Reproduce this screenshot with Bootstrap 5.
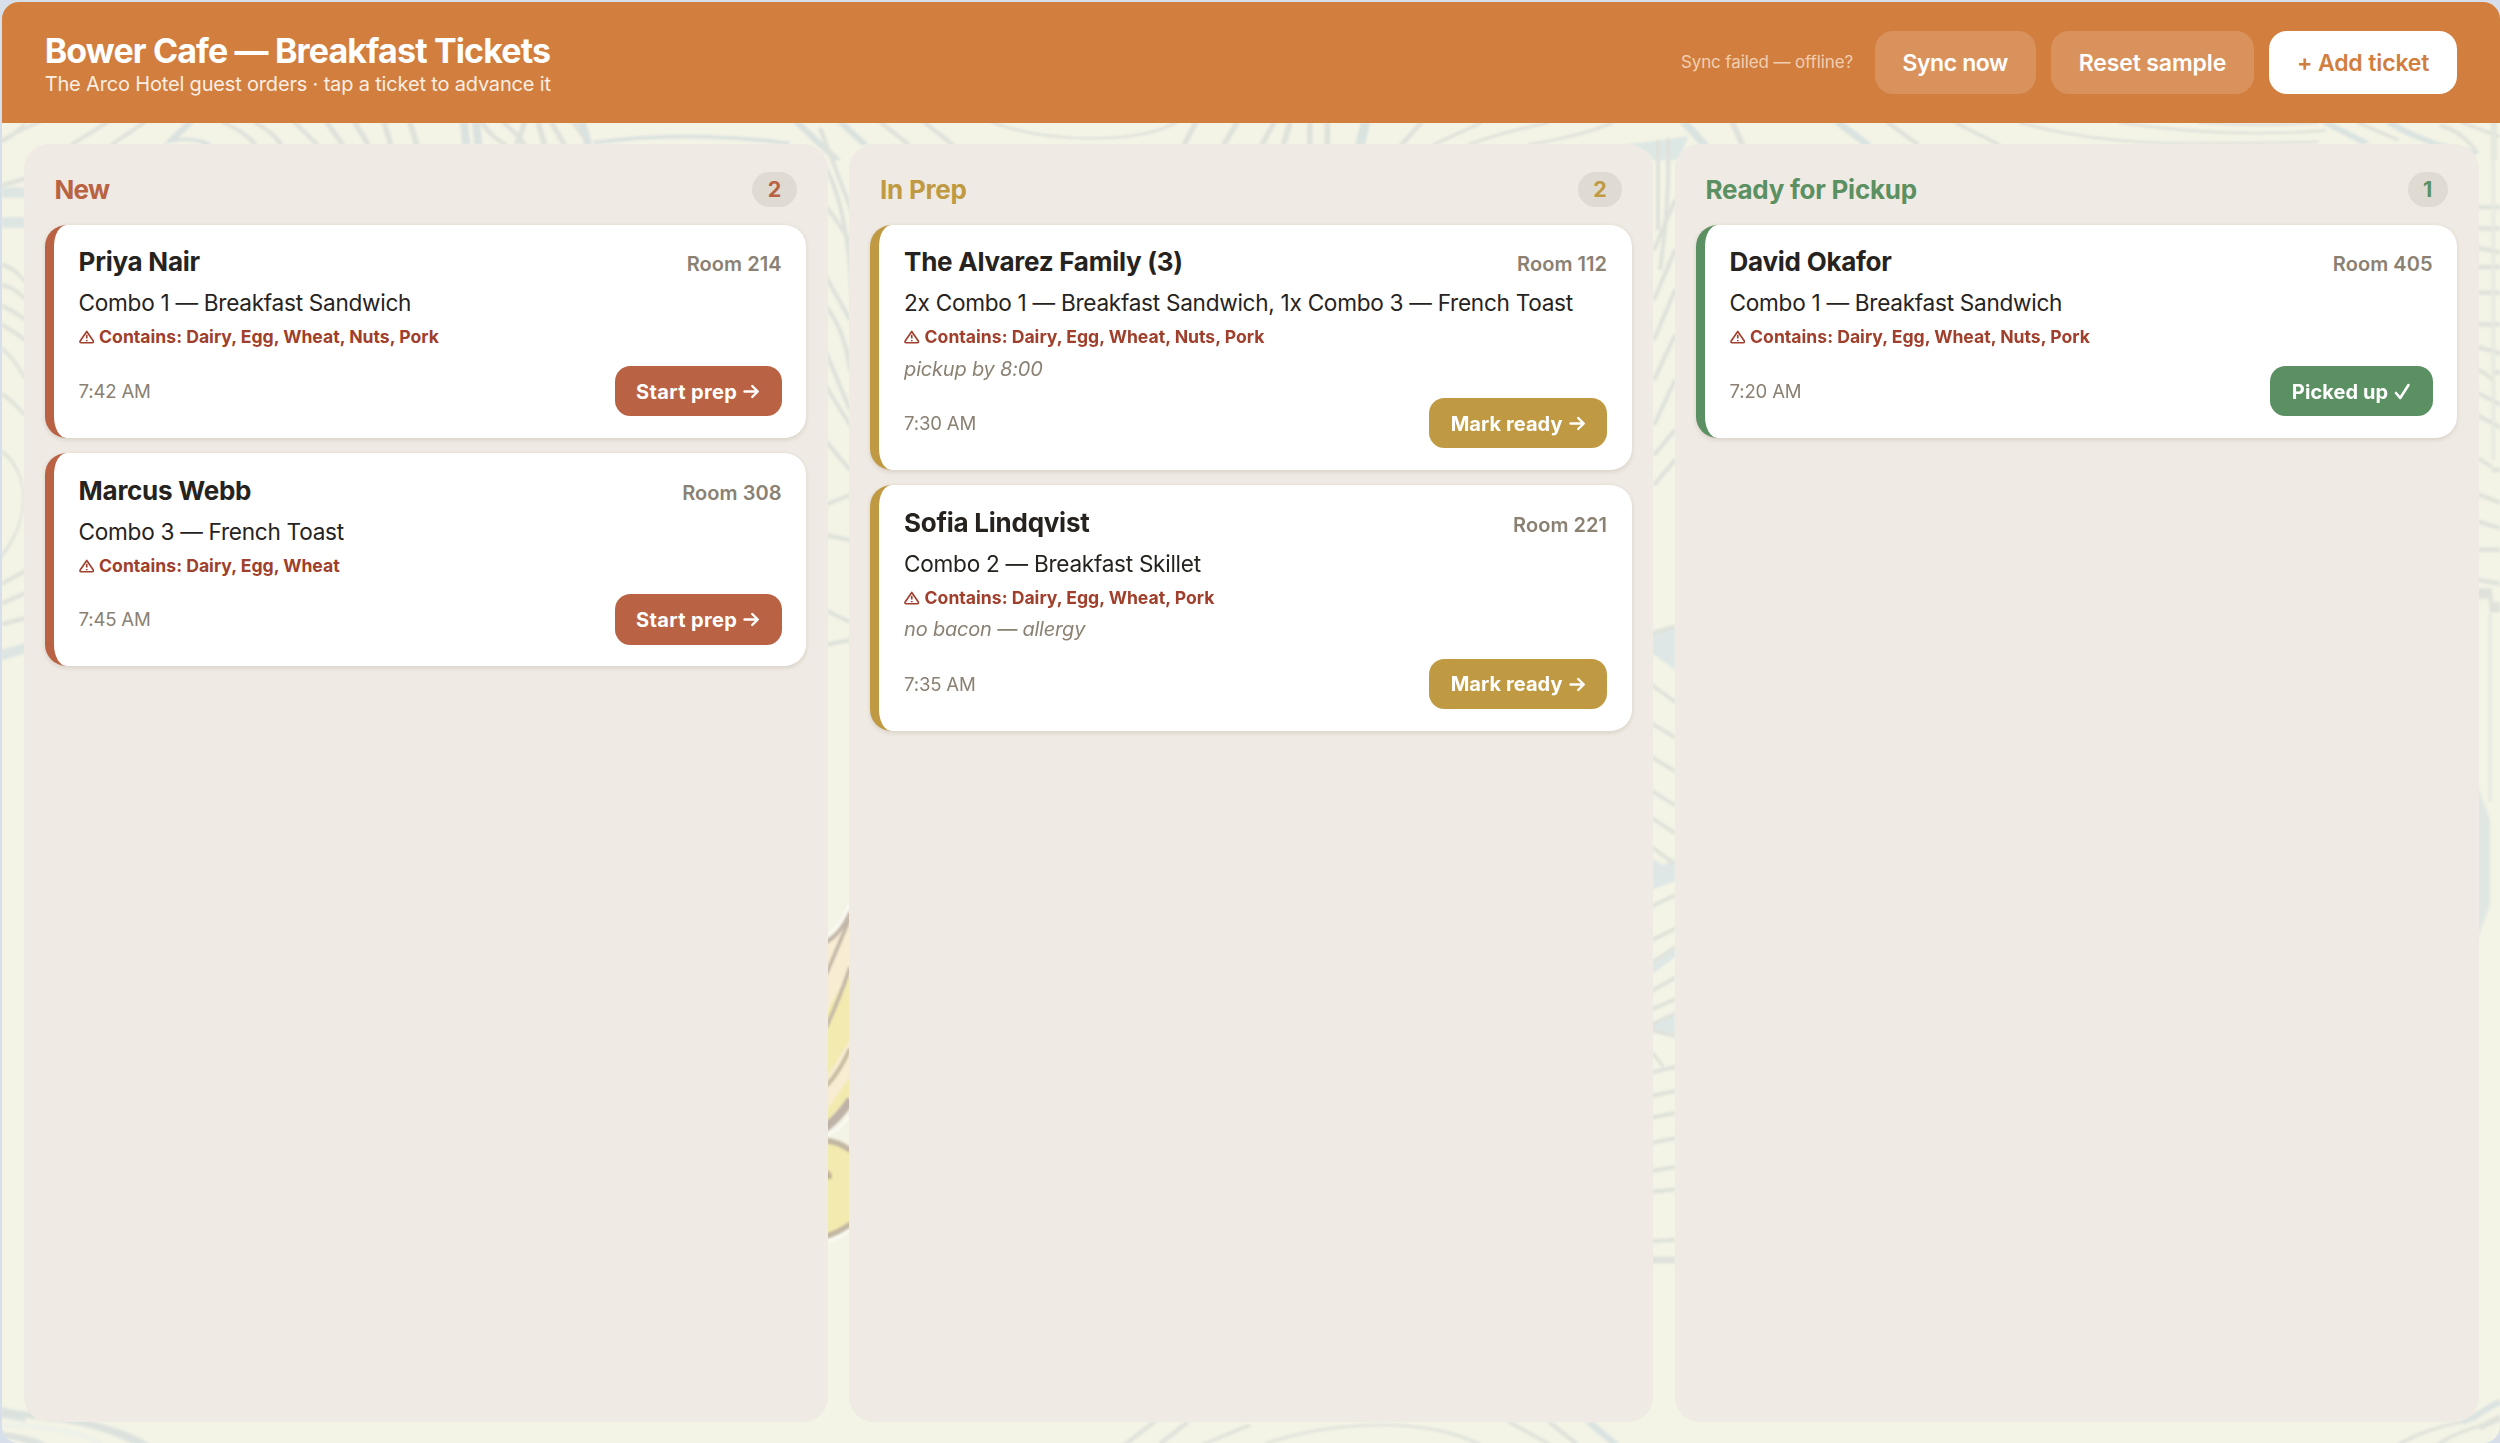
<!DOCTYPE html>
<html lang="en">
<head>
<meta charset="utf-8">
<title>Bower Cafe — Breakfast Tickets</title>
<link href="https://cdn.jsdelivr.net/npm/bootstrap@5.3.0/dist/css/bootstrap.min.css" rel="stylesheet">
<style>
html,body{height:100%}
body{margin:0;background:#d7e0ea;font-family:Inter,"Liberation Sans",sans-serif;color:#26231e;line-height:normal;overflow:hidden;padding:1.7px 0 0 1.7px}
.app-window{height:1441.3px;border-radius:17px;background:#f3f3e6;isolation:isolate}
.backdrop{left:-1.7px;top:-1.7px;width:2500px;height:1443px;z-index:-1}
.app-head{background:#d17e3e;height:121.3px;padding:0 43px;color:#fff}
.app-title{font-size:34px;font-weight:700;line-height:41px;margin:2px 0 0;letter-spacing:-.87px}
.app-sub{font-size:20px;line-height:26px;color:#fbeee3;letter-spacing:-.17px}
.sync-note{font-size:17px;color:#f2cfb2;margin-right:6.4px;letter-spacing:-.12px}
.head-btn{--bs-btn-border-width:0;height:63.5px;padding:2px 27.7px 0;border-radius:18px;font-size:23px;font-weight:600;color:#fff;background:#da925c;white-space:nowrap;letter-spacing:-.13px}
.head-btn.tight{letter-spacing:-.42px}
.head-btn.solid{background:#fff;color:#d17e3e}
.board{padding:21.5px 21.5px 20.5px 22px;gap:21.7px}
.lane{background:#efeae3;border-radius:25px;padding:27.3px 21.3px 0;flex:1 1 0;min-width:0}
.lane-head{padding:0 9.5px;margin-bottom:18px;height:35px;color:var(--tone)}
.lane-title{font-size:26px;font-weight:700;margin:0;line-height:31.5px;letter-spacing:-.25px}
.tone-new .lane-title{letter-spacing:-.68px}
.tally{background:#dfdad2;color:var(--tone);font-size:21.5px;font-weight:700;height:35px;padding:0 15.4px;line-height:35px;border-radius:18px}
.ticket{background:#fff;border-left:9.2px solid var(--tone);border-radius:21.5px;padding:21.6px 24.6px 21.5px;margin-bottom:15.4px;box-shadow:0 1.5px 4px rgba(60,45,20,.13)}
.guest{font-size:26px;font-weight:700;line-height:31.4px;letter-spacing:-.26px}
.room{font-size:20px;font-weight:600;color:#8a8173;letter-spacing:.06px}
.order{font-size:22.6px;line-height:31px;margin-top:9.5px;white-space:nowrap;letter-spacing:-.28px}
.allergens{font-size:17.6px;line-height:22.4px;font-weight:700;color:#a03f2b;margin-top:7.9px}
.allergens svg{width:15.5px;height:14px;margin-right:5px;vertical-align:-1px}
.remark{font-size:20px;line-height:24px;font-style:italic;color:#8a8173;margin-top:8.2px;letter-spacing:-.2px}
.foot{margin-top:17.2px;height:50.5px}
.clock{font-size:18.6px;color:#8a8173;letter-spacing:-.2px}
.step{--bs-btn-border-width:0;background:var(--tone);color:#fff;font-size:20px;font-weight:700;height:50.5px;border-radius:15.4px;padding:1px 21.5px 0;gap:6px;letter-spacing:.07px}
.tone-new .step{letter-spacing:.35px}
.step svg{width:17px;height:17px}
.tone-new{--tone:#b96244}.tone-prep{--tone:#c09a43}.tone-ready{--tone:#5b9062}
</style>
<script src="https://cdn.jsdelivr.net/npm/bootstrap@5.3.0/dist/js/bootstrap.bundle.min.js"></script>
</head>
<body>
<svg width="0" height="0" class="position-absolute">
<symbol id="warn" viewBox="0 0 16 14"><path d="M8 1.3 14.8 11.2Q15.4 12.9 13.8 12.9H2.2Q.6 12.9 1.2 11.2Z" fill="none" stroke="currentColor" stroke-width="1.7" stroke-linejoin="round"/><path d="M8 4.6V8.6M8 10V11.4" stroke="currentColor" stroke-width="1.7"/></symbol>
<symbol id="arrow" viewBox="0 0 17 17"><path d="M1.5 8.5H14.5M9.2 3 14.8 8.5 9.2 14" fill="none" stroke="currentColor" stroke-width="2.4" stroke-linecap="round" stroke-linejoin="round"/></symbol>
<symbol id="tick" viewBox="0 0 17 17"><path d="M2 10 6.2 15 14.5 2" fill="none" stroke="currentColor" stroke-width="2.6" stroke-linecap="round" stroke-linejoin="round"/></symbol>
</svg>
<div class="app-window position-relative overflow-hidden d-flex flex-column">
<svg class="backdrop position-absolute" viewBox="0 0 2500 1443" preserveAspectRatio="none">
<defs><filter id="soft" x="-5%" y="-5%" width="110%" height="110%"><feGaussianBlur stdDeviation="1.3"/></filter></defs>
<g filter="url(#soft)" fill="none" stroke="#dfe2da" stroke-width="7">
<!-- wood grain above the lanes, left half -->
<g transform="translate(0 110) scale(.7972 .3333)">
<path d="M50 36Q20 65 0 95M135 36 90 104M182 36 140 104M280 38Q310 70 320 104M320 38Q345 70 352 104M370 38 398 104M410 38 430 104M445 38 462 104M482 38 490 104M514 38 523 104M605 38Q615 80 635 104M632 38Q650 75 658 104M658 38Q652 80 648 104M675 38 683 104M692 38 708 104M720 38 740 104"/>
<path d="M238 38 215 92Q245 80 262 104M582 38 585 104M597 38 600 104M730 38 738 104M745 98Q860 60 990 100M1000 38 1050 150M1055 38 1085 104" stroke="#dae2df" stroke-width="10"/>
<path d="M1105 38 1140 104M1160 38 1195 104M1245 38Q1300 85 1370 85T1475 38M1500 38 1485 104M1552 38 1535 104"/>
</g>
<!-- wood grain above the lanes, right half -->
<g transform="translate(1250 110) scale(.7972 .3333)">
<path d="M30 38 15 104M50 38 42 104M75 38V104M97 38V104M215 38 190 104M290 38 230 104M375 38Q310 70 275 104M455 38Q420 75 350 104M605 38 618 104M800 38 838 104M885 38 940 104M965 38Q1060 100 1170 100T1340 95M1090 38Q1220 85 1350 62M1190 38Q1270 52 1340 38M1390 38 1440 90M1520 38 1568 80M1560 38V150"/>
<path d="M145 38 138 104M545 38 570 104M738 38 775 104M1350 38 1400 100M1430 38Q1450 70 1490 104L1540 130" stroke="#d9e3e0" stroke-width="12"/>
<path d="M470 104Q510 95 550 78L538 150H505Q500 115 470 104Z" fill="#dde7e4" stroke="none"/>
</g>
<!-- left edge -->
<g transform="translate(0 100) scale(.3333 .8565)" stroke-width="5">
<path d="M5 48Q40 42 75 28M5 100 75 92M5 192Q40 195 75 212M5 216Q40 218 75 232M5 240Q40 246 75 256M5 262Q40 270 75 280M5 290Q40 300 75 325M5 343Q40 352 75 368M5 410Q70 430 70 465T5 532M5 565 75 550M5 588 75 576M5 612 75 605"/>
<path d="M5 108H75M5 143H75M5 648 75 640M5 1532 75 1538" stroke="#dce5e2" stroke-width="12"/>
</g>
<!-- between New and In Prep -->
<g transform="translate(800 110)"><path d="M20 18 55 110M24 55Q48 95 52 190M25 95Q44 120 52 135M25 165 50 210M25 195Q45 220 50 260M25 240 50 300M25 275 50 315M25 330 50 360M25 395 50 385M25 425 50 430M25 500 50 512M25 535 50 530" stroke-width="4"/></g>
<!-- daisy petals -->
<g transform="translate(800 850) scale(.3333 .3782)">
<path d="M78 240Q120 220 150 155V645L78 740Z" fill="#f8edd2" stroke="none"/>
<path d="M78 430 150 320V500L78 605ZM78 690 150 600V650L78 720ZM78 770Q120 775 150 800V1000L78 1020Z" fill="#f3eaaf" stroke="none"/>
<path d="M75 245Q120 225 150 165M78 330 150 180M78 470Q120 390 150 310" stroke="#c3b7a8" stroke-width="11"/>
<path d="M78 625Q120 585 150 525" stroke="#c8bba0" stroke-width="12"/>
<path d="M75 735Q120 705 152 660" stroke="#bfb3a8" stroke-width="24"/>
<path d="M75 768Q115 770 152 795M75 1022Q120 1010 152 988" stroke="#c2b7a3" stroke-width="15"/>
<path d="M75 845Q98 848 96 868L75 872Z" fill="#c1b296" stroke="none"/>
<path d="M75 755Q115 745 152 700M75 1038Q120 1025 152 1005M75 225Q120 210 150 140" stroke="#fbfbf4" stroke-width="8"/>
</g>
<!-- between In Prep and Ready -->
<g transform="translate(1650 110)"><path d="M8 30V120M18 28Q20 90 10 160M4 140 25 90M4 190 25 140M4 230 25 180M4 270 25 225M4 315 25 270M4 345 25 320M4 375 25 350" stroke-width="4"/></g>
<g transform="translate(1630 560) scale(.3333 .5631)">
<path d="M65 130 135 118V195Q100 180 65 165ZM65 530 100 542 135 530V570L65 585ZM65 720 135 690V705L65 735ZM65 825 135 808V840L65 835Z" fill="#dee7e5" stroke="none"/>
<path d="M65 130 135 118M65 222 135 252M65 290 135 315M65 350 135 375M65 410 135 436M65 458 135 485M65 510 135 540M65 615 135 595M65 675 135 655M65 715 135 688M65 765 135 742M65 798 135 780M65 825 135 805M65 835 135 845M65 875Q90 890 100 900M65 910 135 900M65 952 135 943M65 990 135 982M65 1035 135 1027M65 1085 135 1078M65 1122 135 1118M65 1210 135 1207" stroke-width="7"/>
<path d="M65 1243H135" stroke-width="12"/>
</g>
<!-- right edge -->
<g transform="translate(2440 100) scale(.3333 .8565)" stroke-width="5">
<path d="M0 30Q60 35 110 60M112 125H180M112 150H180M112 172 180 178M112 195H180M112 225H180M112 262H180M112 288 180 296M112 315Q150 320 155 328M155 318H180M112 342 180 355M112 368 180 382M112 418 155 428M155 432H180M112 460 180 470M112 492 180 500M112 525H180M112 560 180 565"/>
<path d="M160 30V420M150 600V820" stroke="#e6e9e0" stroke-width="9"/>
<path d="M112 576H150L155 592H180" stroke-width="12"/>
<path d="M112 800 150 840V940L112 980Z" fill="#e0e7e2" stroke="none"/>
<path d="M180 1520Q140 1525 100 1540M180 1538 120 1550" stroke-width="7"/>
</g>
<!-- below the lanes -->
<g transform="translate(0 1390) scale(.7972 .3333)">
<path d="M0 70Q120 80 180 165M0 135Q30 140 50 165" stroke="#dbe1dd" stroke-width="18"/><path d="M0 105Q90 110 125 160" stroke="#edf1ea" stroke-width="10"/>
<path d="M1448 96 1412 162M1490 96 1455 162M1568 105 1510 162"/>
</g>
<g transform="translate(1250 1390) scale(.7972 .3333)">
<path d="M20 160Q90 105 165 105T290 165M325 96 375 162M375 96 410 162M1520 96Q1470 120 1440 165M1568 90Q1510 125 1490 165"/>
<path d="M425 96 458 162M1568 35 1520 100" stroke="#dae3e1" stroke-width="11"/>
</g>
</g>
</svg>

<header class="app-head d-flex align-items-center justify-content-between flex-shrink-0">
<div><h1 class="app-title">Bower Cafe — Breakfast Tickets</h1><div class="app-sub">The Arco Hotel guest orders · tap a ticket to advance it</div></div>
<div class="d-flex align-items-center" style="gap:15.4px">
<span class="sync-note">Sync failed — offline?</span>
<button class="btn head-btn tight">Sync now</button>
<button class="btn head-btn">Reset sample</button>
<button class="btn head-btn solid">+ Add ticket</button>
</div>
</header>

<main class="board d-flex flex-grow-1">
<section class="lane tone-new">
<div class="lane-head d-flex align-items-center justify-content-between"><h2 class="lane-title">New</h2><span class="tally">2</span></div>
<article class="ticket">
<div class="d-flex justify-content-between align-items-baseline"><span class="guest">Priya Nair</span><span class="room">Room 214</span></div>
<div class="order">Combo 1 — Breakfast Sandwich</div>
<div class="allergens"><svg><use href="#warn"/></svg>Contains: Dairy, Egg, Wheat, Nuts, Pork</div>
<div class="foot d-flex justify-content-between align-items-center"><span class="clock">7:42 AM</span><button class="btn step d-flex align-items-center">Start prep<svg><use href="#arrow"/></svg></button></div>
</article>
<article class="ticket">
<div class="d-flex justify-content-between align-items-baseline"><span class="guest">Marcus Webb</span><span class="room">Room 308</span></div>
<div class="order">Combo 3 — French Toast</div>
<div class="allergens"><svg><use href="#warn"/></svg>Contains: Dairy, Egg, Wheat</div>
<div class="foot d-flex justify-content-between align-items-center"><span class="clock">7:45 AM</span><button class="btn step d-flex align-items-center">Start prep<svg><use href="#arrow"/></svg></button></div>
</article>
</section>

<section class="lane tone-prep">
<div class="lane-head d-flex align-items-center justify-content-between"><h2 class="lane-title">In Prep</h2><span class="tally">2</span></div>
<article class="ticket">
<div class="d-flex justify-content-between align-items-baseline"><span class="guest">The Alvarez Family (3)</span><span class="room">Room 112</span></div>
<div class="order">2x Combo 1 — Breakfast Sandwich, 1x Combo 3 — French Toast</div>
<div class="allergens"><svg><use href="#warn"/></svg>Contains: Dairy, Egg, Wheat, Nuts, Pork</div>
<div class="remark">pickup by 8:00</div>
<div class="foot d-flex justify-content-between align-items-center"><span class="clock">7:30 AM</span><button class="btn step d-flex align-items-center">Mark ready<svg><use href="#arrow"/></svg></button></div>
</article>
<article class="ticket">
<div class="d-flex justify-content-between align-items-baseline"><span class="guest">Sofia Lindqvist</span><span class="room">Room 221</span></div>
<div class="order">Combo 2 — Breakfast Skillet</div>
<div class="allergens"><svg><use href="#warn"/></svg>Contains: Dairy, Egg, Wheat, Pork</div>
<div class="remark">no bacon — allergy</div>
<div class="foot d-flex justify-content-between align-items-center"><span class="clock">7:35 AM</span><button class="btn step d-flex align-items-center">Mark ready<svg><use href="#arrow"/></svg></button></div>
</article>
</section>

<section class="lane tone-ready">
<div class="lane-head d-flex align-items-center justify-content-between"><h2 class="lane-title">Ready for Pickup</h2><span class="tally">1</span></div>
<article class="ticket">
<div class="d-flex justify-content-between align-items-baseline"><span class="guest">David Okafor</span><span class="room">Room 405</span></div>
<div class="order">Combo 1 — Breakfast Sandwich</div>
<div class="allergens"><svg><use href="#warn"/></svg>Contains: Dairy, Egg, Wheat, Nuts, Pork</div>
<div class="foot d-flex justify-content-between align-items-center"><span class="clock">7:20 AM</span><button class="btn step d-flex align-items-center">Picked up<svg><use href="#tick"/></svg></button></div>
</article>
</section>
</main>
</div>
</body>
</html>
